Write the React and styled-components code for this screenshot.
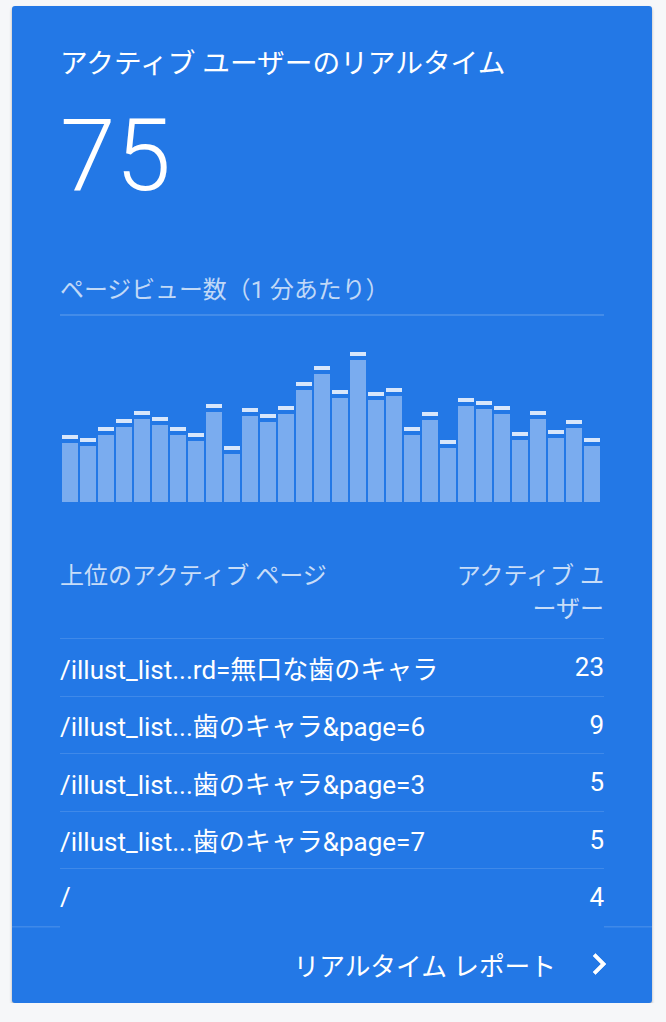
import React from 'react'
import styled, { createGlobalStyle } from 'styled-components'

const GlobalStyle = createGlobalStyle`
    body{
        margin: 0;
        background: #f6f7f9;
        font-family: Roboto, 'Noto Sans CJK JP', sans-serif;
    }
`

const Card = styled.div`
    margin: 6px 14px 0 12px;
    background: #2378e6;
    border-radius: 3px;
    box-shadow: 0 2px 3px rgba(0, 0, 0, 0.3);
    color: #fff;
    overflow: hidden;
`

const Body = styled.div`
    padding: 0 48px;
`

const Title = styled.h2`
    margin: 0;
    padding-top: 40px;
    font-size: 27.7px;
    font-weight: 400;
    line-height: 36px;
`

const BigNumber = styled.div`
    font-size: 100px;
    font-weight: 300;
    line-height: 100px;
    margin-top: 24px;
`

const SubTitle = styled.div`
    margin-top: 68px;
    font-size: 23.9px;
    line-height: 32px;
    color: rgba(255, 255, 255, 0.72);
    padding-bottom: 8px;
    border-bottom: 2px solid rgba(255, 255, 255, 0.15);
`

const Chart = styled.div`
    height: 186px;
    display: flex;
    align-items: flex-end;
    gap: 2px;
    padding-left: 2px;
`

const BarCol = styled.div`
    width: 16px;
    display: flex;
    flex-direction: column;
    gap: 4px;
    .cap{
        height: 4px;
        background: #d7e6fb;
    }
    .bar{
        flex: 1;
        background: #7aacef;
    }
`

const TableHead = styled.div`
    margin-top: 58px;
    display: flex;
    justify-content: space-between;
    font-size: 24px;
    line-height: 33px;
    color: rgba(255, 255, 255, 0.75);
    padding-bottom: 12px;
    border-bottom: 1.5px solid rgba(255, 255, 255, 0.13);
    .right{
        text-align: right;
        width: 150px;
    }
`

const Row = styled.div`
    height: 56.5px;
    display: flex;
    align-items: center;
    justify-content: space-between;
    font-size: 26px;
    border-bottom: ${({last}) => last ? 'none' : '1.5px solid rgba(255, 255, 255, 0.13)'};
`

const Footer = styled.div`
    height: 77px;
    display: flex;
    align-items: center;
    justify-content: flex-end;
    gap: 22px;
    padding-right: 32px;
    font-size: 25.7px;
    background: linear-gradient(to right,
        rgba(255, 255, 255, 0.13) 48px, transparent 48px,
        transparent calc(100% - 48px), rgba(255, 255, 255, 0.13) calc(100% - 48px)) top / 100% 1.5px no-repeat;
`

const caps = [435, 438, 427, 419, 411, 417, 427, 433, 404, 446, 408, 414, 406, 382, 366, 390, 352, 392, 388, 427, 412, 440, 398, 401, 406, 432, 411, 430, 420, 438]

const rows = [
    ['/illust_list...rd=無口な歯のキャラ', '23'],
    ['/illust_list...歯のキャラ&page=6', '9'],
    ['/illust_list...歯のキャラ&page=3', '5'],
    ['/illust_list...歯のキャラ&page=7', '5'],
    ['/', '4'],
]

const Chevron = () => (
    <svg width="42" height="42" viewBox="0 0 24 24" fill="#fff" stroke="#fff" strokeWidth="0.35" strokeLinejoin="round">
        <path d="M10 6L8.59 7.41 13.17 12l-4.58 4.59L10 18l6-6z" />
    </svg>
)

const App = () => {
    return (
        <>
            <GlobalStyle />
            <Card>
                <Body>
                    <Title>アクティブ ユーザーのリアルタイム</Title>
                    <BigNumber>75</BigNumber>
                    <SubTitle>ページビュー数（1 分あたり）</SubTitle>
                    <Chart>
                        {caps.map((c, i) => (
                            <BarCol key={i} style={{height: 502 - c}}>
                                <div className='cap' />
                                <div className='bar' />
                            </BarCol>
                        ))}
                    </Chart>
                    <TableHead>
                        <div>上位のアクティブ ページ</div>
                        <div className='right'>アクティブ ユーザー</div>
                    </TableHead>
                    {rows.map(([page, n], i) => (
                        <Row key={i} last={i === rows.length - 1}>
                            <span>{page}</span>
                            <span>{n}</span>
                        </Row>
                    ))}
                </Body>
                <Footer>
                    <span>リアルタイム レポート</span>
                    <Chevron />
                </Footer>
            </Card>
        </>
    )
}

export default App
